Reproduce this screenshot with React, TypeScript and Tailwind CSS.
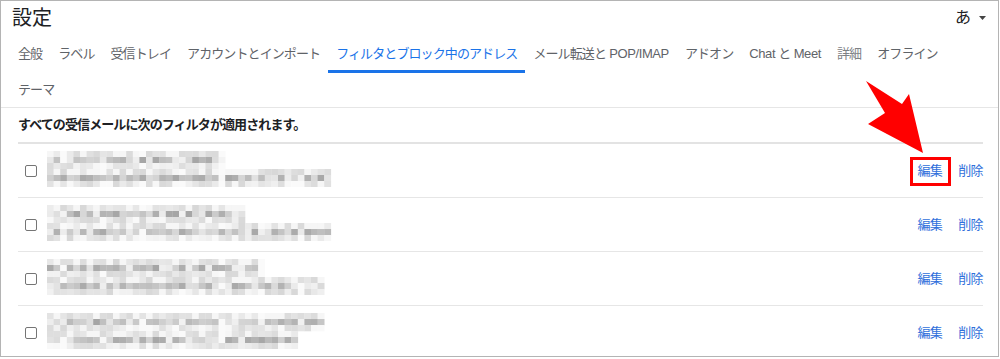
import React from 'react';

const TABS_ROW1 = [
  '全般',
  'ラベル',
  '受信トレイ',
  'アカウントとインポート',
  'フィルタとブロック中のアドレス',
  'メール転送と POP/IMAP',
  'アドオン',
  'Chat と Meet',
  '詳細',
  'オフライン',
];

const ACTIVE = 'フィルタとブロック中のアドレス';

// top line width, bottom line width of the blurred filter text
const ROWS: [number, number][] = [
  [180, 283],
  [198, 283],
  [218, 276],
  [278, 253],
];

const FONT = { fontFamily: '"Liberation Sans", "Noto Sans CJK JP", sans-serif' };

function rng(seed: number) {
  let s = seed;
  return () => {
    s = (s * 9301 + 49297) % 233280;
    return s / 233280;
  };
}

// latin runs keep near-normal spacing, kana get tightened
const Label: React.FC<{ text: string }> = ({ text }) => (
  <>
    {text.split(/([A-Za-z/ ]+)/).map((part, i) =>
      /[A-Za-z ]/.test(part) ? (
        <span key={i} className="tracking-[-0.4px] whitespace-pre">
          {part}
        </span>
      ) : (
        <span key={i}>{part}</span>
      )
    )}
  </>
);

const Mosaic: React.FC<{ top: number; bottom: number; seed: number }> = ({ top, bottom, seed }) => {
  const r = rng(seed);
  const size = 6.6;
  const rects: React.ReactNode[] = [];
  for (let row = 0; row < 6; row++) {
    const width = row < 3 ? top : bottom;
    const cols = Math.round(width / size);
    const mid = row === 1 || row === 4;
    for (let c = 0; c < cols; c++) {
      const v = r();
      let g = mid ? 165 + v * 75 : 215 + v * 35;
      if (!mid && row !== 2 && row !== 5 && v > 0.6) g = 246;
      if (c % 6 === 2 && v > 0.5) g = Math.min(250, g + 30);
      const gi = Math.round(g);
      rects.push(
        <rect
          key={`${row}-${c}`}
          x={c * size}
          y={row * 6}
          width={size + 0.3}
          height={6.3}
          fill={`rgb(${gi},${gi},${gi})`}
        />
      );
    }
  }
  return (
    <svg width={300} height={36} className="block">
      {rects}
    </svg>
  );
};

export default function App() {
  return (
    <div className="w-[1000px] h-[359px] bg-white" style={FONT}>
      <div className="relative w-[999px] h-[357px] border border-[#b4b4b4] overflow-hidden">
        {/* title */}
        <div className="h-[37px] flex items-start justify-between pl-[11px] pr-[12px] pt-[3px]">
          <span className="text-[20px] leading-[28px] text-[#202124]">設定</span>
          <div className="flex items-center gap-[8px] pt-[1px]">
            <span className="text-[16px] leading-[26px] text-[#202124]">あ</span>
            <svg width="7" height="4" viewBox="0 0 7 4">
              <path d="M0 0 L7 0 L3.5 4 Z" fill="#444" />
            </svg>
          </div>
        </div>

        {/* tabs */}
        <div className="pl-[9px] border-b border-[#e6e6e6]">
          <div className="flex">
            {TABS_ROW1.map((t) => (
              <div
                key={t}
                className={`h-[35px] px-2 flex items-center border-b-[3px] text-[13px] tracking-[-0.9px] whitespace-nowrap ${
                  t === ACTIVE
                    ? 'border-[#1a73e8] text-[#1a73e8]'
                    : t === '詳細'
                    ? 'border-transparent text-[#7d8185]'
                    : 'border-transparent text-[#5f6368]'
                }`}
              >
                <Label text={t} />
              </div>
            ))}
          </div>
          <div className="flex">
            <div className="h-[34px] px-2 flex items-center text-[13px] tracking-[-0.9px] text-[#5f6368]">
              テーマ
            </div>
          </div>
        </div>

        {/* filters */}
        <div className="ml-[17px] w-[965px]">
          <div className="h-[34px] flex items-center text-[13px] tracking-[-0.9px] font-bold text-[#202124]">
            すべての受信メールに次のフィルタが適用されます。
          </div>
          <div className="h-[2px] bg-[#e3e3e3]" />
          {ROWS.map(([top, bottom], i) => (
            <div key={i} className="h-[54px] flex items-center border-b border-[#e6e6e6]">
              <div className="ml-[7px] w-[12px] h-[12px] rounded-[2px] border-[1.5px] border-[#757575]" />
              <div className="ml-[10px] self-start mt-[7px]">
                <Mosaic top={top} bottom={bottom} seed={i * 97 + 13} />
              </div>
              <div className="ml-auto flex items-center gap-[16px] text-[13px] tracking-[-0.6px] text-[#2f6fdb]">
                <span>編集</span>
                <span>削除</span>
              </div>
            </div>
          ))}
        </div>

        {/* annotation */}
        <div className="absolute left-[909px] top-[156px] w-[41px] h-[29px] border-[3px] border-[#ff0000]" />
        <svg className="absolute left-0 top-0" width="999" height="357" style={{ pointerEvents: 'none' }}>
          <polygon points="865,80 901,103 908,93 922,152 867,123 884,112" fill="#ff0000" />
        </svg>
      </div>
    </div>
  );
}
